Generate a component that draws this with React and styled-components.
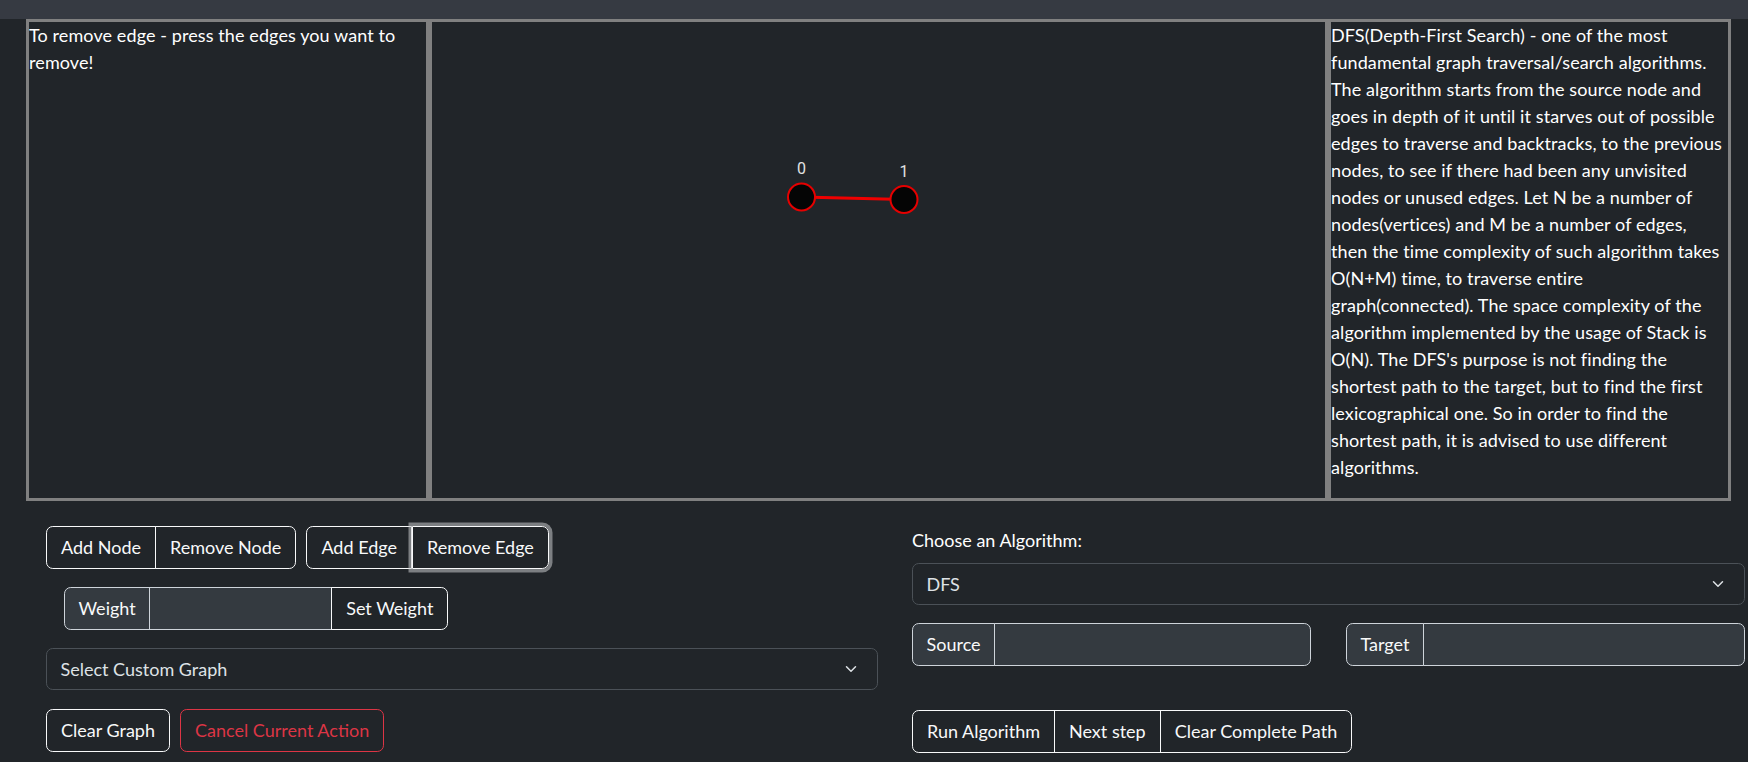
import React from 'react';
import styled, { createGlobalStyle } from 'styled-components';

const FONT = "Lato, 'Liberation Sans', sans-serif";

const GlobalStyle = createGlobalStyle`
  html, body {
    margin: 0;
    padding: 0;
    background: #212529;
    color: #fff;
    font-family: ${FONT};
    font-size: 18px;
    line-height: 27px;
  }
  * { box-sizing: border-box; }
`;

const descriptionLines = [
  'DFS(Depth-First Search) - one of the most',
  'fundamental graph traversal/search algorithms.',
  'The algorithm starts from the source node and',
  'goes in depth of it until it starves out of possible',
  'edges to traverse and backtracks, to the previous',
  'nodes, to see if there had been any unvisited',
  'nodes or unused edges. Let N be a number of',
  'nodes(vertices) and M be a number of edges,',
  'then the time complexity of such algorithm takes',
  'O(N+M) time, to traverse entire',
  'graph(connected). The space complexity of the',
  'algorithm implemented by the usage of Stack is',
  "O(N). The DFS's purpose is not finding the",
  'shortest path to the target, but to find the first',
  'lexicographical one. So in order to find the',
  'shortest path, it is advised to use different',
  'algorithms.'
];

const nodes = [
  { id: 0, x: 369.5, y: 175 },
  { id: 1, x: 472, y: 177.5 }
];

const edges = [[0, 1]];

function GraphCanvas() {
  return (
    <svg width="893" height="476" viewBox="0 0 893 476">
      {edges.map(([a, b]) => (
        <line
          key={`${a}-${b}`}
          x1={nodes[a].x}
          y1={nodes[a].y}
          x2={nodes[b].x}
          y2={nodes[b].y}
          stroke="#f00000"
          strokeWidth="3"
        />
      ))}
      {nodes.map((n) => (
        <g key={n.id}>
          <circle cx={n.x} cy={n.y} r="13.5" fill="#050505" stroke="#e60000" strokeWidth="2" />
          <text
            x={n.x}
            y={n.y - 23}
            textAnchor="middle"
            fontFamily="Roboto, 'Liberation Sans', sans-serif"
            fontSize="16"
            fill="#e2e2e2"
          >
            {n.id}
          </text>
        </g>
      ))}
    </svg>
  );
}

function Chevron() {
  return (
    <svg width="12" height="12" viewBox="0 0 16 16">
      <path d="M2 5l6 6 6-6" fill="none" stroke="#dee2e6" strokeWidth="2" strokeLinecap="round" strokeLinejoin="round" />
    </svg>
  );
}

export default function App() {
  return (
    <>
      <GlobalStyle />
      <TopBar />
      <Workspace>
        <SidePanel $side="left">
          To remove edge - press the edges you want to remove!
        </SidePanel>
        <CanvasPanel>
          <GraphCanvas />
        </CanvasPanel>
        <SidePanel $side="right">
          {descriptionLines.map((line, i) => (
            <Line key={i}>{line}</Line>
          ))}
        </SidePanel>
      </Workspace>

      <Controls>
        <Column>
          <Row>
            <BtnGroup>
              <Btn>Add Node</Btn>
              <Btn>Remove Node</Btn>
            </BtnGroup>
            <BtnGroup>
              <Btn>Add Edge</Btn>
              <Btn $focused>Remove Edge</Btn>
            </BtnGroup>
          </Row>
          <Row $indent={18}>
            <InputGroup>
              <GroupLabel>Weight</GroupLabel>
              <GroupInput $w={183} />
              <Btn $attached>Set Weight</Btn>
            </InputGroup>
          </Row>
          <Select $gapAfter={1}>
            <span>Select Custom Graph</span>
            <Chevron />
          </Select>
          <Row>
            <Btn $standalone>Clear Graph</Btn>
            <Btn $standalone $danger>Cancel Current Action</Btn>
          </Row>
        </Column>

        <Column $right>
          <Label>Choose an Algorithm:</Label>
          <Select>
            <span>DFS</span>
            <Chevron />
          </Select>
          <PairRow>
            <InputGroup $full>
              <GroupLabel>Source</GroupLabel>
              <GroupInput $grow />
            </InputGroup>
            <InputGroup $full>
              <GroupLabel>Target</GroupLabel>
              <GroupInput $grow />
            </InputGroup>
          </PairRow>
          <Row $top={44}>
            <BtnGroup>
              <Btn>Run Algorithm</Btn>
              <Btn>Next step</Btn>
              <Btn>Clear Complete Path</Btn>
            </BtnGroup>
          </Row>
        </Column>
      </Controls>
    </>
  );
}

// --- styled-components ---

const TopBar = styled.div`
  height: 19px;
  background: #363a42;
`;

const Workspace = styled.div`
  display: grid;
  grid-template-columns: 406px 893px 406px;
  height: 482px;
  margin-left: 26px;
  width: 1705px;
`;

const SidePanel = styled.div`
  border: 3px solid #808080;
  border-right-width: ${(p) => (p.$side === 'left' ? '6px' : '3px')};
  border-left-width: ${(p) => (p.$side === 'right' ? '6px' : '3px')};
  font-size: 18px;
  line-height: 27px;
  letter-spacing: 0.1px;
  overflow: hidden;
`;

const Line = styled.div`
  white-space: nowrap;
`;

const CanvasPanel = styled.div`
  border-top: 3px solid #808080;
  border-bottom: 3px solid #808080;
  overflow: hidden;
  svg { display: block; }
`;

const Controls = styled.div`
  display: grid;
  grid-template-columns: 832px 833px;
  column-gap: 34px;
  padding-left: 46px;
  padding-top: 25px;
`;

const Column = styled.div`
  display: flex;
  flex-direction: column;
  gap: 18px;
  padding-top: ${(p) => (p.$right ? '1px' : '0')};
`;

const Row = styled.div`
  display: flex;
  gap: 10px;
  padding-left: ${(p) => p.$indent || 0}px;
  margin-top: ${(p) => (p.$top ? p.$top - 18 : 0)}px;
`;

const PairRow = styled.div`
  display: grid;
  grid-template-columns: 399px 399px;
  column-gap: 35px;
`;

const Label = styled.div`
  font-size: 18px;
  line-height: 27px;
  margin-bottom: -9px;
`;

const BtnGroup = styled.div`
  display: inline-flex;
  border-radius: 6.75px;
`;

const Btn = styled.button`
  font-family: ${FONT};
  font-size: 18px;
  line-height: 27px;
  height: 43px;
  padding: 7px 14px;
  background: transparent;
  color: ${(p) => (p.$danger ? '#dc3545' : '#f8f9fa')};
  border: 1px solid ${(p) => (p.$danger ? '#dc3545' : '#f8f9fa')};
  border-radius: ${(p) => (p.$standalone ? '6.75px' : '0')};
  cursor: pointer;
  position: relative;
  white-space: nowrap;
  box-shadow: ${(p) => (p.$focused ? '0 0 0 3.5px rgba(200, 202, 204, 0.55)' : 'none')};
  z-index: ${(p) => (p.$focused ? 1 : 0)};

  ${BtnGroup} > & + & {
    margin-left: -1px;
  }
  ${BtnGroup} > &:first-child {
    border-top-left-radius: 6.75px;
    border-bottom-left-radius: 6.75px;
  }
  ${BtnGroup} > &:last-child {
    border-top-right-radius: 6.75px;
    border-bottom-right-radius: 6.75px;
  }
`;

const InputGroup = styled.div`
  display: ${(p) => (p.$full ? 'flex' : 'inline-flex')};
  height: 43px;
  & > *:first-child {
    border-top-left-radius: 6.75px;
    border-bottom-left-radius: 6.75px;
  }
  & > *:last-child {
    border-top-right-radius: 6.75px;
    border-bottom-right-radius: 6.75px;
  }
  & > * + * {
    margin-left: -1px;
  }
  & > button {
    border-radius: 0;
  }
`;

const GroupLabel = styled.span`
  display: flex;
  align-items: center;
  padding: 0 13.5px;
  background: #343a40;
  border: 1px solid #ced4da;
  color: #f8f9fa;
  font-size: 18px;
`;

const GroupInput = styled.div`
  width: ${(p) => (p.$w ? `${p.$w}px` : 'auto')};
  flex: ${(p) => (p.$grow ? 1 : 'none')};
  background: #343a40;
  border: 1px solid #ced4da;
`;

const Select = styled.div`
  display: flex;
  align-items: center;
  justify-content: space-between;
  height: 42px;
  margin-bottom: ${(p) => p.$gapAfter || 0}px;
  padding: 0 20px 0 13.5px;
  border: 1px solid #4b5157;
  border-radius: 6.75px;
  background: #212529;
  color: #dee2e6;
  font-size: 18px;
`;
